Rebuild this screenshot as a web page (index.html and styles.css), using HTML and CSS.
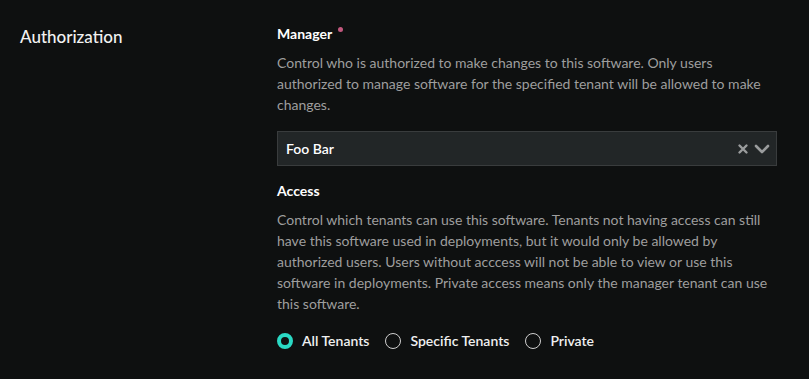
FILE: index.html
```html
<!DOCTYPE html>
<html lang="en">
<head>
    <meta charset="UTF-8">
    <meta name="viewport" content="width=device-width, initial-scale=1.0">
    <title>Authorization</title>
    <link rel="stylesheet" href="styles.css">
</head>
<body>

    <div class="section">

        <h2 class="section-title">Authorization</h2>

        <div class="fields">

            <div class="field">
                <label class="field-label">Manager <span class="required"></span></label>
                <p class="field-help">Control who is authorized to make changes to this software. Only users authorized to manage software for the specified tenant will be allowed to make changes.</p>

                <div class="select">
                    <span class="select-value">Foo Bar</span>
                    <div class="select-icons">
                        <svg width="12" height="12" viewBox="0 0 12 12">
                            <path d="M2.5 2.5 L9.5 9.5 M9.5 2.5 L2.5 9.5" stroke="#9a9c9d" stroke-width="2.4" stroke-linecap="round"/>
                        </svg>
                        <svg width="16" height="12" viewBox="0 0 16 12">
                            <path d="M2 3 L8 9 L14 3" fill="none" stroke="#9a9c9d" stroke-width="2.6" stroke-linecap="round" stroke-linejoin="round"/>
                        </svg>
                    </div>
                </div>
            </div>

            <div class="field">
                <label class="field-label">Access</label>
                <p class="field-help">Control which tenants can use this software. Tenants not having access can still have this software used in deployments, but it would only be allowed by authorized users. Users without acccess will not be able to view or use this software in deployments. Private access means only the manager tenant can use this software.</p>

                <div class="radios">
                    <label class="radio"><span class="dot checked"></span>All Tenants</label>
                    <label class="radio"><span class="dot"></span>Specific Tenants</label>
                    <label class="radio"><span class="dot"></span>Private</label>
                </div>
            </div>

        </div>

    </div>

</body>
</html>
```

FILE: styles.css
```css
*{
    margin: 0;
    padding: 0;
    box-sizing: border-box;
}

body{
    background: #0e1010;
    font-family: "Lato", "Liberation Sans", sans-serif;
    color: #fff;
}

.section{
    display: grid;
    grid-template-columns: 257px 500px;
    padding: 26px 20px 20px 20px;
}

.section-title{
    font-size: 17px;
    font-weight: 500;
    color: #f2f2f2;
    line-height: 22px;
}

.field{
    margin-bottom: 17px;
}

.field-label{
    display: block;
    font-size: 14px;
    font-weight: 700;
    color: #fff;
    line-height: 16px;
}

.required{
    display: inline-block;
    width: 5px;
    height: 5px;
    border-radius: 50%;
    background: #c2587e;
    margin-left: 3px;
    vertical-align: 7px;
}

.field-help{
    font-size: 14px;
    color: #9e9e9e;
    line-height: 21px;
    margin-top: 10px;
}

.select{
    display: flex;
    align-items: center;
    justify-content: space-between;
    height: 35px;
    margin-top: 16px;
    padding: 0 6px 0 8px;
    background: #222627;
    border: 1px solid #393c3d;
}

.select-value{
    font-size: 14px;
    font-weight: 600;
    color: #fff;
}

.select-icons{
    display: flex;
    align-items: center;
    gap: 5px;
}

.radios{
    display: flex;
    gap: 16px;
    margin-top: 18px;
}

.radio{
    display: flex;
    align-items: center;
    gap: 9px;
    font-size: 14px;
    font-weight: 600;
    color: #f0f0f0;
}

.dot{
    width: 16px;
    height: 16px;
    border-radius: 50%;
    border: 1px solid #cfcfcf;
}

.dot.checked{
    border: 4px solid #2ad9c4;
    background: #0e1010;
}
```
